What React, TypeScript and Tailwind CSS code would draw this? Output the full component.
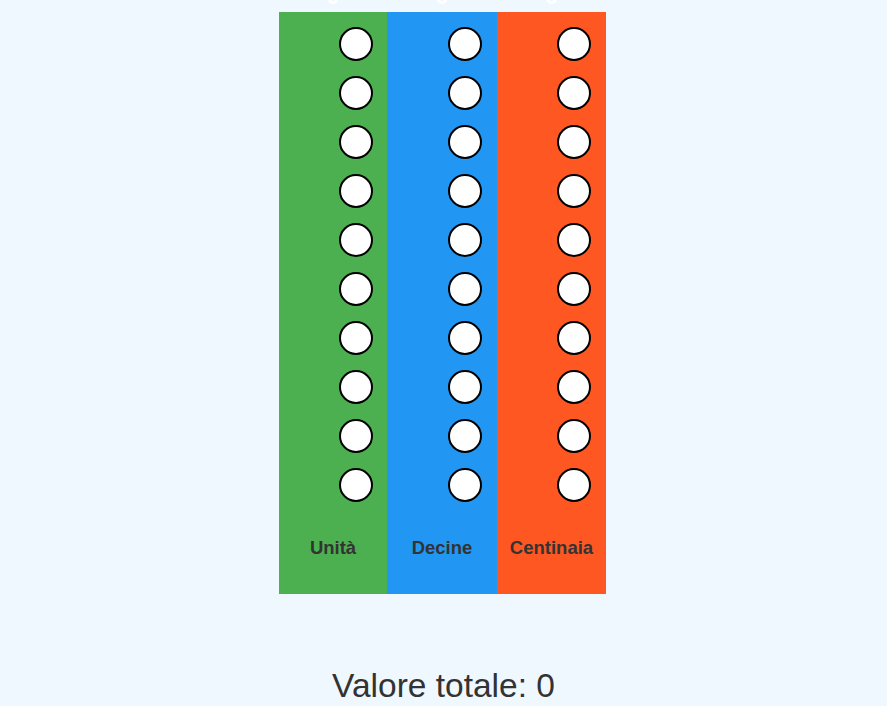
import React from "react";

const cols = [
  { name: "Unità", color: "bg-[#4caf50]", w: "w-[108px]", pr: "pr-[14px]" },
  { name: "Decine", color: "bg-[#2196f3]", w: "w-[110px]", pr: "pr-[15px]" },
  { name: "Centinaia", color: "bg-[#ff5722]", w: "w-[109px]", pr: "pr-[15px]" },
];

export default function App() {
  return (
    <div
      className="min-h-[706px] w-full bg-[#f0f8ff] flex flex-col items-center pt-[12px]"
      style={{ fontFamily: '"Liberation Sans", Arial, sans-serif' }}
    >
      <div className="flex mr-[2px]">
        {cols.map((c) => (
          <div key={c.name} className={`relative ${c.w} h-[582px] ${c.color} flex flex-col`}>
            <div className="absolute left-0 right-0 top-[-28px] text-center text-white font-bold text-[24px] leading-[24px]">
              0
            </div>
            <div className={`flex flex-col items-end gap-[15px] pt-[15px] ${c.pr}`}>
              {Array.from({ length: 10 }).map((_, i) => (
                <div
                  key={i}
                  className="w-[34px] h-[34px] rounded-full bg-white border-2 border-black box-border"
                />
              ))}
            </div>
            <div className="mt-[35px] text-center font-bold text-[18.5px] leading-[21px] text-[#333]">
              {c.name}
            </div>
          </div>
        ))}
      </div>
      <div className="mt-[73px] text-[33.5px] text-[#333] leading-[38px]">Valore totale: 0</div>
    </div>
  );
}
